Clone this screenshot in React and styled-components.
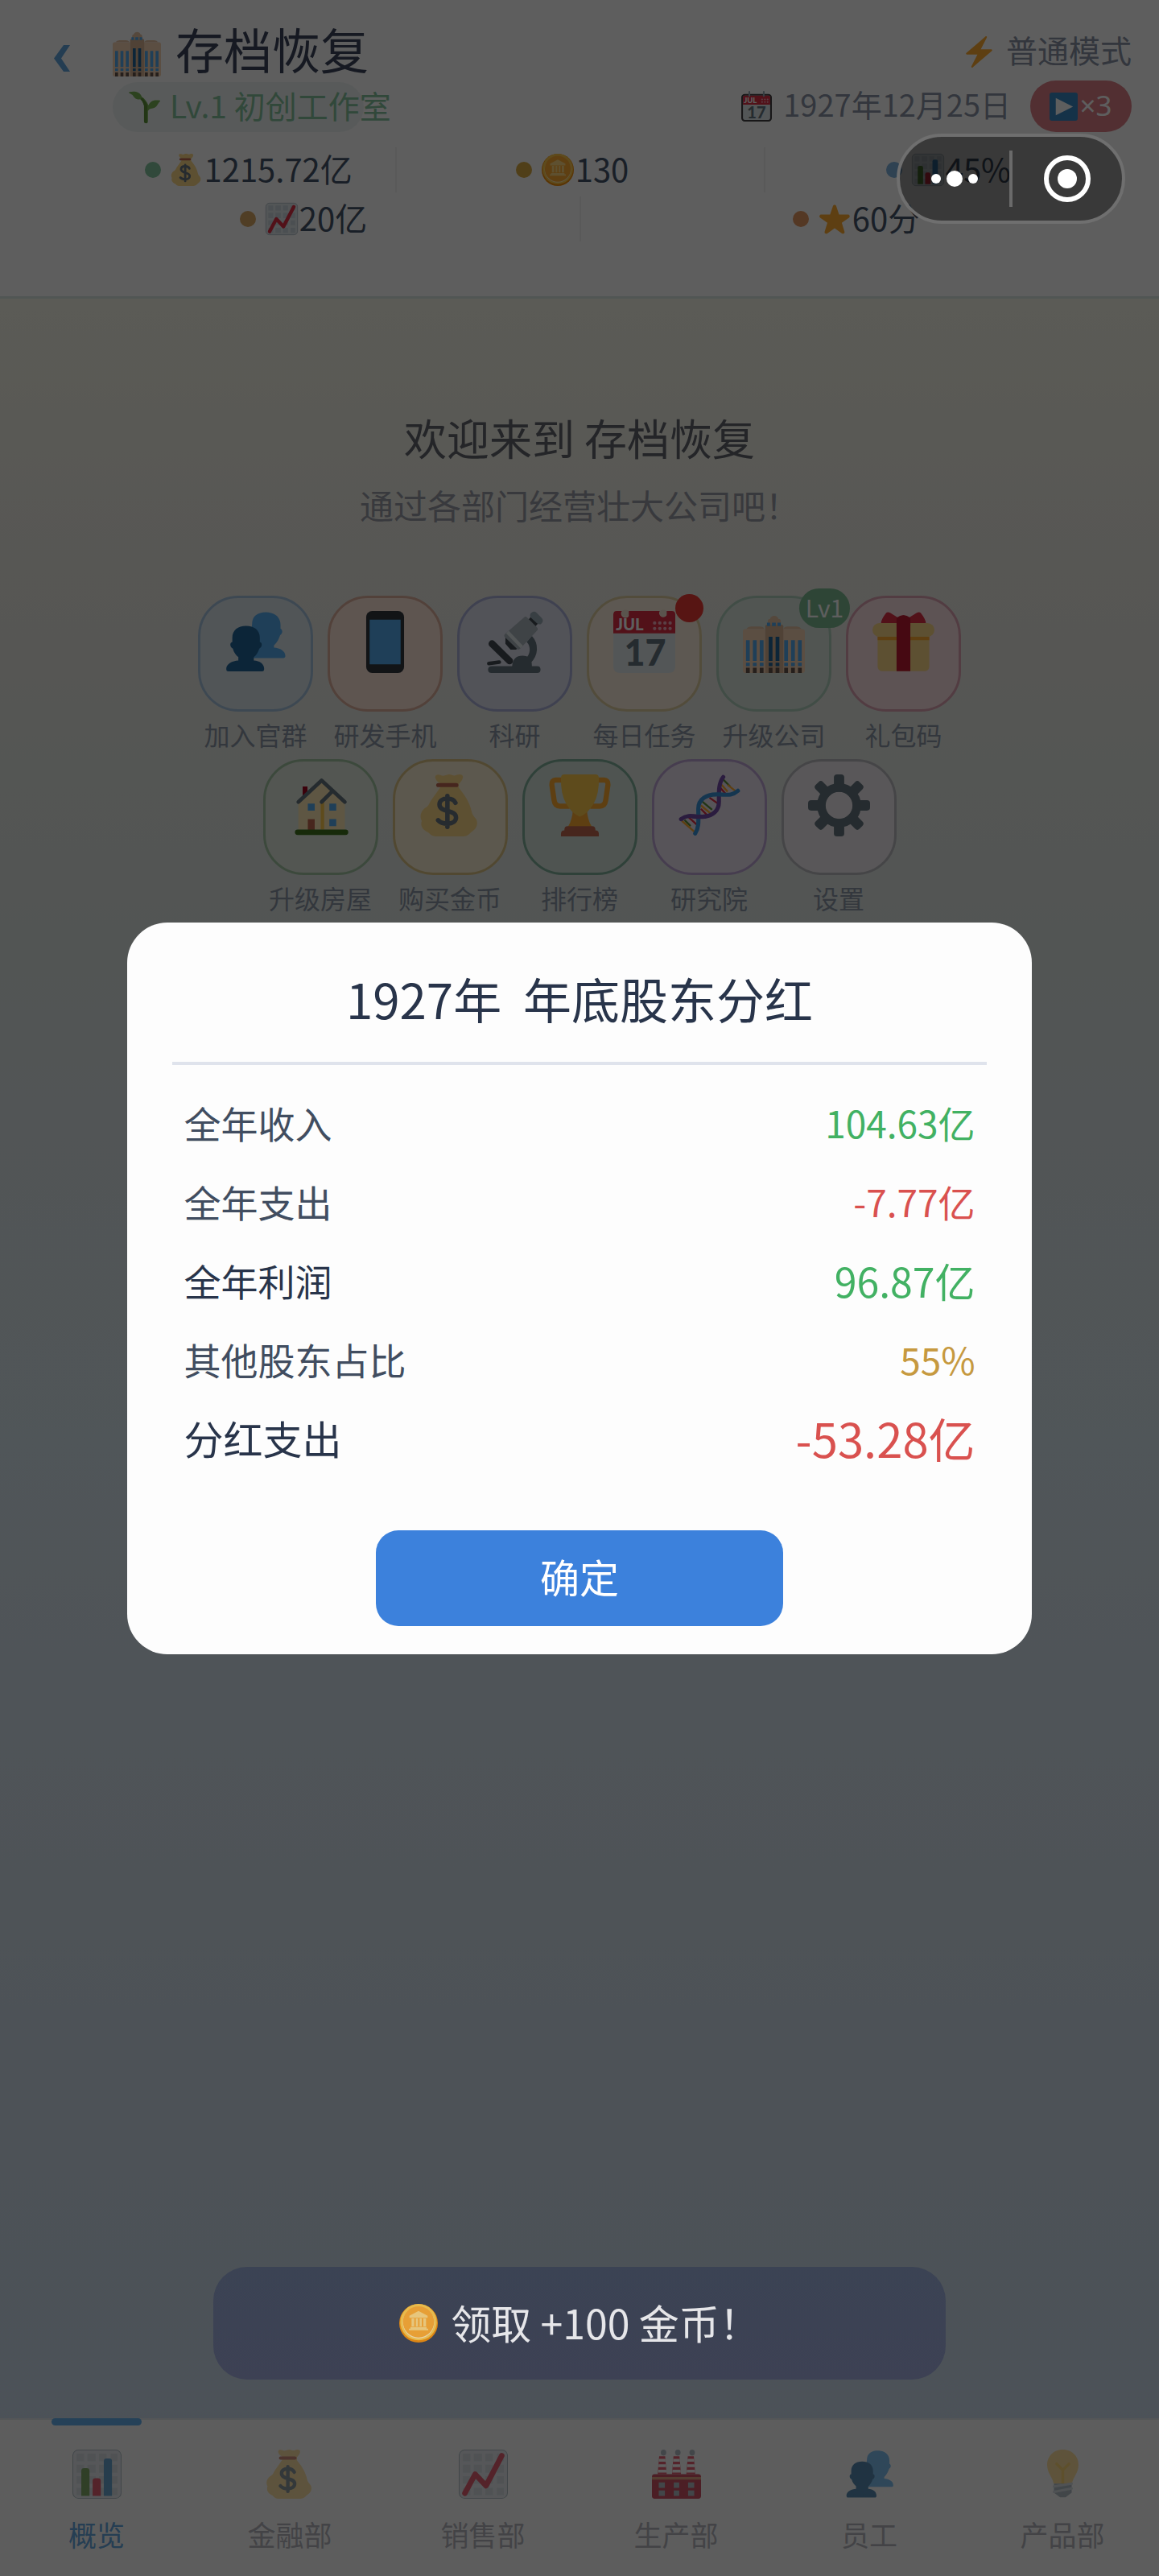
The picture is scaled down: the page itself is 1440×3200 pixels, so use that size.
import React from "react";
import styled, { createGlobalStyle } from "styled-components";

const GlobalStyle = createGlobalStyle`
  *, *::before, *::after { box-sizing: border-box; }
  html, body { margin: 0; padding: 0; }
  body, button {
    font-family: "Noto Sans CJK SC", "Noto Sans", sans-serif;
    font-weight: 400;
  }
  button { border: 0; margin: 0; padding: 0; background: none; color: inherit; cursor: pointer; }
  h1, h2, p, dl, dd, dt { margin: 0; font-weight: 400; }
`;

/* ---------- icons (36-unit grid) ---------- */

const Glyph = styled.svg`
  display: block;
  flex: none;
  width: ${(p) => p.$size}px;
  height: ${(p) => p.$size}px;
  overflow: visible;
`;

const Svg = ({ size, children }) => (
  <Glyph $size={size} viewBox="0 0 36 36" aria-hidden="true">
    {children}
  </Glyph>
);

const Building = ({ size }) => (
  <Svg size={size}>
    <path fill="#E6C3A4" d="M2 10.500q1-1.500 3-1.500h5q2 0 2.500 1.500zM23.500 10.500q.5-1.500 2.500-1.500h5q2 0 3 1.500z" />
    <path fill="#F6D3B4" d="M0 12q0-1.500 1.500-1.500H13V36H1.500Q0 36 0 34.500zM23 10.500h11.500q1.500 0 1.500 1.500v22.500q0 1.500-1.500 1.500H23z" />
    <path fill="#D9B494" d="M13 9q0-1 1-1h8.500q1 0 1 1v27H13z" />
    <path fill="#E6C3A4" d="M14.500 8V6q0-1.500 1.300-1.500.5-1.700 2.400-1.700t2.400 1.700Q22 4.500 22 6v2z" />
    <path fill="#55ACEE" d="M14 6.800h1.800v2H14zm2.900 0h2.200v2h-2.200zm3.200 0H22v2h-1.900z" />
    <path fill="#55ACEE" d="M1.800 17H4v12H1.800zm4 0H8v12H5.800zm4 0H12v12H9.800zM24 17h2.200v12H24zm4 0h2.200v12H28zm4 0h2.200v12H32zM1.800 30H4v2H1.800zm4 0H8v2H5.800zm4 0H12v2H9.800zM24 30h2.200v2H24zm4 0h2.200v2H28zm4 0h2.200v2H32z" />
    <path fill="#226699" d="M15 15h2.200v14H15zm4 0h2.200v14H19zM15 30h2.200v2H15zm4 0h2.200v2H19z" />
    <path fill="#66564E" d="M1.800 33H4v3H1.800zm4 0H8v3H5.800zm4 0H12v3H9.800zM15 33h2.200v3H15zm4 0h2.200v3H19zm5 0h2.200v3H24zm4 0h2.200v3H28zm4 0h2.200v3H32z" />
  </Svg>
);

const Sprout = ({ size }) => (
  <Svg size={size}>
    <path fill="#77B255" d="M22.500 15.500c3-6 7.500-6.500 13-5.500.8.200.6 1 0 1.400-2.500 2-3 7.600-9 7.800-2 .1-3.500 1-4.500 3v12q0 2-2.200 2T17.500 34V16C16.500 12 15 9.500 13 8.500 7.500 10 6 5.500 4 3.500 3 2.500 1 2 .4 1.300 0 .7.500.2 1 .2 6-.8 13-.5 15 6c3 1.500 5.500 5 7.500 9.500z" />
    <path fill="#5C913B" d="M18 10c2 2 3 4 3.300 7l-.3 19q-3.500.5-3.500-2V16c-1-3-2-5.500-4-7.200l1.500-2.300q2 1.500 3 3.500z" />
  </Svg>
);

const MoneyBag = ({ size }) => (
  <Svg size={size}>
    <path fill="#FDD888" d="M12 5C9.500 4 8 .5 10.500.2c1.500-.2 2.500.8 3.500.6C15.500.5 16.500-.2 18 .1c1.500.3 2 .9 3.500.3 1.500-.7 4-.6 3.800 1.100-.1 1.700-1.300 3-2.300 4v2.300c2.500 3.200 6.200 7.700 7.500 14.200.3 1.400 1.200 2.500 2.200 3.600 1.500 2 1 4.900-.7 6.400-1 .9-1.800 1.400-2.600 2.300C28 35.700 27 36 25.500 36h-16c-2 0-3-1-4.500-2.400-3-1.600-4.600-3.600-3.600-6.600-1.700-3 .1-6.500 2.500-7.800 1.600-.9 2-2.600 3-4.200L12 7.800z" />
    <path fill="#BF6952" d="M11 5h10.500q1.200 0 1.200 1.200t-1.200 1.200H11q-1.200 0-1.200-1.200T11 5z" />
    <path fill="none" stroke="#67757F" strokeWidth="2.600" strokeLinecap="round" d="M16.300 12.500v18M21 16.500c-.7-1.600-2.400-2.500-4.700-2.500-2.800 0-4.600 1.300-4.600 3.400 0 5 9.600 2.700 9.600 7.600 0 2.200-2 3.600-4.800 3.600-2.400 0-4.500-.7-5.600-2" />
  </Svg>
);

const Coin = ({ size }) => (
  <Svg size={size}>
    <circle cx="18" cy="18" r="18" fill="#F4900C" />
    <circle cx="18" cy="17" r="17" fill="#FFCC4D" />
    <circle cx="18" cy="17.500" r="14.700" fill="#FFE8B6" />
    <circle cx="18" cy="16.800" r="14.500" fill="#FFAC33" />
    <path fill="#FFD983" d="M18 6.500l8.500 4.500v2h-17v-2zM11.500 13.500h2.500v7.500h-2.500zm4 0h2v7.500h-2zm3.500 0h2v7.500h-2zm3.500 0H25v7.500h-2.500zM10.500 21.500h15V23H27v1.500H9V23h1.500z" />
  </Svg>
);

const GridCard = () => (
  <>
    <rect x=".3" y=".3" width="35.400" height="35.400" rx="4" fill="#E1E8ED" stroke="#99AAB5" strokeWidth=".6" />
    <path fill="#CCD6DD" d="M3 3h5.500v5.500H3zM11 3h6v5.500h-6zM19.500 3h5.500v5.500h-5.500zM28 3h5v5.500h-5zM3 11h5.500v6H3zM11 11h6v6h-6zM19.500 11h5.500v6h-5.500zM28 11h5v6h-5zM3 19.500h5.500V25H3zM11 19.500h6V25h-6zM19.500 19.500h5.500V25h-5.500zM28 19.500h5V25h-5zM3 28h5.500v5.500H3zM11 28h6v5.500h-6zM19.500 28h5.500v5.500h-5.500zM28 28h5v5.500h-5z" />
  </>
);

const TrendChart = ({ size }) => (
  <Svg size={size}>
    <GridCard />
    <path fill="none" stroke="#DD2E44" strokeWidth="4" strokeLinecap="round" strokeLinejoin="round" d="M4.500 32L12 18l8 8.500L31.500 4.500" />
  </Svg>
);

const BarChart = ({ size }) => (
  <Svg size={size}>
    <GridCard />
    <path fill="#5C913B" d="M6.500 34V15.500q0-2 2-2h2q2 0 2 2V34z" />
    <path fill="#DD2E44" d="M14.800 34V23q0-2 2-2h2q2 0 2 2v11z" />
    <path fill="#3B88C3" d="M23 34V8.500q0-2 2-2h2q2 0 2 2V34z" />
  </Svg>
);

const Star = ({ size }) => (
  <Svg size={size}>
    <path fill="#FFAC33" d="M27.287 34.627c-.404 0-.806-.124-1.152-.371L18 28.422l-8.135 5.834c-.343.247-.744.371-1.147.371-.405 0-.81-.125-1.157-.378-.679-.492-.967-1.365-.713-2.164l3.034-9.792-8.062-5.681c-.685-.488-.977-1.358-.723-2.159.252-.801.993-1.346 1.832-1.352l9.947-.016 3.215-9.548c.268-.793 1.012-1.327 1.848-1.327.838 0 1.581.534 1.850 1.327l3.154 9.548 10.008.016c.84.006 1.581.551 1.833 1.352.253.801-.038 1.671-.722 2.159l-8.063 5.681 3.033 9.792c.254.799-.033 1.672-.713 2.164-.347.253-.752.378-1.157.378z" />
  </Svg>
);

const Bolt = ({ size }) => (
  <Svg size={size}>
    <path fill="#FFAC33" d="M32.938 15.651C32.792 15.260 32.418 15 32 15H19.925L26.890 1.458c.219-.426.106-.947-.271-1.243C26.437.071 26.218 0 26 0c-.233 0-.466.082-.653.243L18 6.588 3.347 19.243c-.316.273-.43.714-.284 1.105S3.582 21 4 21h12.075L9.110 34.542c-.219.426-.106.947.271 1.243.182.144.401.215.619.215.233 0 .466-.082.653-.243L18 29.412l14.653-12.655c.317-.273.43-.714.285-1.106z" />
  </Svg>
);

const CalendarFace = () => (
  <>
    <g fill="#F4ABBA">
      {[24, 27, 30, 33].map((x) => (
        <React.Fragment key={x}>
          <circle cx={x} cy="7" r="1" />
          <circle cx={x} cy="10.200" r="1" />
        </React.Fragment>
      ))}
    </g>
    <text x="1.500" y="11.300" fill="#fff" fontFamily="Lato, sans-serif" fontWeight="900" fontSize="9.500">JUL</text>
    <text x="18.500" y="32" fill="#66757F" textAnchor="middle" fontFamily="Lato, sans-serif" fontWeight="900" fontSize="21">17</text>
  </>
);

const Calendar = ({ size }) => (
  <Svg size={size}>
    <path fill="#E1E8ED" d="M0 12h36v20q0 4-4 4H4q-4 0-4-4z" />
    <path fill="#DD2E44" d="M0 13V2q0-2 2-2h3a2 2 0 0 0 4 3V0h18a2 2 0 0 0 4 2.500V0h3q2 0 2 2v11z" />
    <circle cx="7" cy="1.200" r="1.900" fill="#F3E3D0" />
    <circle cx="29" cy="1.200" r="1.900" fill="#F3E3D0" />
    <CalendarFace />
  </Svg>
);

const DeskCalendar = ({ size }) => (
  <Svg size={size}>
    <rect x="1" y="4.500" width="34" height="30.500" rx="3" fill="#E1E8ED" stroke="#414042" strokeWidth="2" />
    <path fill="#DD2E44" d="M2 7q0-1.500 1.500-1.500h29Q34 5.500 34 7v9H2z" />
    <path stroke="#99AAB5" strokeWidth="2" strokeLinecap="round" d="M9.500 1v5M26.500 1v5" />
    <g fill="#F4ABBA">
      {[24.5, 27.8, 31].map((x) => (
        <React.Fragment key={x}>
          <circle cx={x} cy="10" r="1" />
          <circle cx={x} cy="13" r="1" />
        </React.Fragment>
      ))}
    </g>
    <text x="3" y="14.500" fill="#fff" fontFamily="Lato, sans-serif" fontWeight="900" fontSize="9">JUL</text>
    <text x="18" y="32.500" fill="#66757F" textAnchor="middle" fontFamily="Lato, sans-serif" fontWeight="900" fontSize="19">17</text>
  </Svg>
);

const Play = ({ size }) => (
  <Svg size={size}>
    <rect width="36" height="36" rx="3" fill="#3B88C3" />
    <path fill="#fff" d="M8 7l22 11L8 29z" />
  </Svg>
);

const People = ({ size }) => (
  <Svg size={size}>
    <path fill="#55ACEE" d="M16 7.500C16 3 19.300.7 24 .7S32.500 3.300 32.500 8v2.300c1.400.6 1.300 2.900-.2 3.700-.7 2.300-1.900 4.300-3.600 6v1.300c3.500.2 6.600 2 6.600 4.700 0 .9-.2 1.300-1 1.300H14z" />
    <path fill="#226699" d="M4.500 15.500c0-4.300 3.200-6.800 8-6.800s8 2.500 8 6.800V18c1.600.2 1.500 3-.3 3.800-.8 2.500-1.900 3.800-3.200 5v2c3.500.2 6 2 6 4.800 0 1-.3 1.500-1.200 1.500H2.200C1.300 35.100 1 34.600 1 33.600c0-2.800 3.500-4.600 7-4.800v-2c-1.300-1.200-2.600-2.700-3.200-5-1.800-.8-1.900-3.600-.3-3.800z" />
  </Svg>
);

const Phone = ({ size }) => (
  <Svg size={size}>
    <rect x="7" width="22" height="36" rx="3.500" fill="#31373D" />
    <path fill="#55ACEE" d="M9 5h18v26H9z" />
  </Svg>
);

const Microscope = ({ size }) => (
  <Svg size={size}>
    <path fill="#66757F" d="M28 14.500q3.200 3.500 2.900 8T27 30.500l-3.500-2q3-2.500 3.200-5.500T25 18z" />
    <path fill="#66757F" d="M5 32h11.500q.5-6 6-6t5.500 6h3q2 0 2 2t-2 2H4.500q-2 0-2-2t2.500-2z" />
    <path stroke="#414B52" strokeWidth="4" strokeLinecap="round" d="M4.800 19l10.200 10" />
    <path stroke="#414B52" strokeWidth="2.200" strokeLinecap="round" d="M3 30.500l6-.8" />
    <path fill="#414B52" d="M12.600 15l7 7-1 .4h-3L12.600 19z" />
    <path fill="#414B52" d="M25.500 5.500l2.500-2.700 4 4L29.500 9.500z" />
    <path fill="#AAB5BD" d="M23.300 3.800q1-1 2 0l5.600 5.700q1 1 0 2L21.200 21.900q-1 1-2 0l-6.800-6.600q-1-1 0-2z" />
    <path fill="#E1E8ED" d="M14.500 11.500l8.300 8.700-1.400 1.400-8.400-8.600z" />
    <path fill="#99AAB5" d="M27.500 1.200q1.500-1.500 3-.4l3.300 3.400q1.200 1.500-.2 3-1.400 1.200-2.800-.2L27.500 4q-1.200-1.400 0-2.800z" />
  </Svg>
);

const Gift = ({ size }) => (
  <Svg size={size}>
    <path fill="#FDD888" d="M3 13h30v19q0 3-3 3H6q-3 0-3-3z" />
    <rect y="7" width="36" height="8" rx="4" fill="#FDD888" />
    <path fill="#FFAC33" d="M3 15h30v2H3z" />
    <path fill="#DD2E44" d="M5 7q0-2 3-6 1-.8 2.500.2L15 4q1.500-1.500 3-1.500T21 4l4.500-2.800q1.500-1 2.500-.2 3 4 3 6H22v2h-8V7z" />
    <path fill="#BE1931" d="M14 4q4-3 8 0v31h-8z" />
  </Svg>
);

const House = ({ size }) => (
  <Svg size={size}>
    <path fill="#A0041E" d="M7.500 7h2.800v7H7.500z" />
    <path fill="#FFE8B6" d="M5 15L18.500 3.500 32 15v17H5z" />
    <path fill="#FFCC4D" d="M18 16l2-1v17h-2z" />
    <path fill="none" stroke="#66757F" strokeWidth="2.200" strokeLinecap="round" strokeLinejoin="round" d="M5 16L18.500 3.500 32 16M25 9.500L18.500 16" />
    <path fill="#55ACEE" d="M10.500 17h4v4h-4zM23 17h4v4h-4zM23 26h4v4h-4z" />
    <path fill="#C1694F" d="M10.500 26h4v6.500h-4z" />
    <rect x="3" y="32" width="31" height="3.200" rx="1.600" fill="#3E721D" />
  </Svg>
);

const Trophy = ({ size }) => (
  <Svg size={size}>
    <path fill="none" stroke="#FFAC33" strokeWidth="3" strokeLinejoin="round" d="M9 3.300H4Q1.500 3.300 1.700 6l1.300 9q.5 3.500 3.500 3.500H12M27 3.300h5q2.500 0 2.300 2.700L33 15q-.5 3.500-3.500 3.500H24" />
    <path fill="#FFAC33" d="M14 20h8q.5 7 3 10.500H11Q13.500 27 14 20z" />
    <path fill="#FFCC4D" d="M7 2q0-2 2-2h18q2 0 2 2 .3 9-3 15-3.500 6-8 7.500Q13.500 23 10 17 6.700 11 7 2z" />
    <path fill="#C1694F" d="M9 32q0-2 2-2h14q2 0 2 2v.5q2 0 2 2V36H7v-1.500q0-2 2-2z" />
  </Svg>
);

const Dna = ({ size }) => (
  <Svg size={size}>
    <g strokeWidth="1.100">
      <path stroke="#5C913B" d="M26 3l4 4M3.500 26.500L7 30M13.500 15.500l6 5" />
      <path stroke="#FFAC33" d="M25 6l3.500 4M2 27l8 7M13 18l6 5M28.500 6l5 4" />
      <path stroke="#DD2E44" d="M24.500 8l3 3.500M6 25l5 4.500M18 13.500l5 3.500M13 20l4 4" />
    </g>
    <path fill="none" stroke="#744EAA" strokeWidth="2.400" strokeLinecap="round" d="M1.500 26C6 22.500 10 25 15 24.500s8.500-3.500 8.500-8.500S23 5.500 26 1.500" />
    <path fill="none" stroke="#3B94D9" strokeWidth="2.400" strokeLinecap="round" d="M34.500 9.500c-4 3.500-7 2-12.500 2.100S11.500 14 11.500 20s.7 10.500-1.800 14.300" />
    <path fill="none" stroke="#744EAA" strokeWidth="2.400" d="M8 24.400c3 .3 5 .4 8 0" />
  </Svg>
);

const Gear = ({ size }) => (
  <Svg size={size}>
    <g fill="#66757F">
      {[0, 45, 90, 135, 180, 225, 270, 315].map((a) => (
        <rect key={a} x="15" y="0" width="6" height="10" rx="1.800" transform={`rotate(${a} 18 18)`} />
      ))}
    </g>
    <circle cx="18" cy="18" r="10.300" fill="none" stroke="#66757F" strokeWidth="5" />
  </Svg>
);

const Factory = ({ size }) => (
  <Svg size={size}>
    {[4, 14.5, 25].map((x) => (
      <g key={x} transform={`translate(${x} 0)`}>
        <ellipse cx="4.500" cy="2.200" rx="2" ry="2.200" fill="#99AAB5" />
        <path fill="#DD2E44" d="M1.300 4.800h4.400L6.800 18H.2z" />
        <path fill="#fff" d="M1.100 6.800h4.800l.1 2H1zM.9 10.800h5.300l.1 2H.7zM.6 14.800h5.900l.2 2H.4z" />
      </g>
    ))}
    <rect y="18" width="36" height="18" rx="2" fill="#BE1931" />
    <path fill="#DA8A5E" d="M0 20h36v2H0z" />
    <path fill="#99AAB5" d="M5 24h4.500v4H5zM16 24h4v4h-4zM26.500 24H31v4h-4.500zM5 30h4.500v4H5zM16 30h4v4h-4zM26.500 30H31v4h-4.500z" />
  </Svg>
);

const Bulb = ({ size }) => (
  <Svg size={size}>
    <path fill="#FFD983" d="M18 0c6.500 0 11.500 4.700 11.500 11.200 0 6-4 8.800-4.800 13.800H11.300c-.8-5-4.800-7.800-4.800-13.800C6.500 4.700 11.500 0 18 0z" />
    <path fill="none" stroke="#FFCC4D" strokeWidth="2" strokeLinecap="round" d="M13.500 10.500L18 15l4.500-4.500M18 15v10" />
    <path fill="#99AAB5" d="M11.500 25h13v6.500L20 35h-4l-4.500-3.500z" />
    <path stroke="#CCD6DD" strokeWidth="1.800" strokeLinecap="round" d="M11.500 27l13-2M11.500 31l13-2.500" />
  </Svg>
);

/* ---------- page ---------- */

const Page = styled.div`
  position: relative;
  display: flex;
  flex-direction: column;
  min-height: 100vh;
  background: linear-gradient(180deg, #fbfae9 0%, #f6f6e8 12%, #ecebe5 22%, #dfe6e4 36%, #dae8f0 56%, #d2dfec 78%, #cbdcef 100%);
`;

const Header = styled.header`
  padding: 28px 34px 68px;
  background: #ffffff;
  border-bottom: 3px solid #dbe8e4;
`;

const TopRow = styled.div`
  display: flex;
  align-items: flex-start;
`;

const BackButton = styled.button`
  flex: none;
  display: flex;
  align-items: center;
  width: 106px;
  height: 88px;
  padding-left: 33px;
`;

const Brand = styled.div`
  flex: 1;
  min-width: 0;
`;

const BrandTitle = styled.div`
  display: flex;
  align-items: center;
  gap: 18px;
  height: 74px;
  h1 {
    color: #3c465c;
    font-size: 60px;
    line-height: 68px;
    padding-bottom: 10px;
  }
`;

const LevelPill = styled.div`
  display: flex;
  align-items: center;
  gap: 12px;
  width: 312px;
  height: 62px;
  padding: 0 20px;
  border-radius: 31px;
  background: #eff5f4;
  color: #86c49e;
  font-size: 39px;
  line-height: 52px;
  white-space: nowrap;
  span { padding-bottom: 6px; }
`;

const Meta = styled.div`
  flex: none;
  color: #8a94a6;
  font-size: 39px;
  line-height: 52px;
`;

const MetaRow = styled.div`
  display: flex;
  align-items: center;
  justify-content: flex-end;
  gap: 14px;
  height: ${(p) => p.$height}px;
  span { padding-bottom: 6px; }
`;

const DateText = styled.span`
  font-size: 38px;
`;

const SpeedButton = styled.button`
  display: flex;
  align-items: center;
  justify-content: center;
  gap: 2px;
  width: 126px;
  height: 64px;
  margin-left: 10px;
  border-radius: 32px;
  background: #dd8088;
  color: #ffffff;
  font-family: "Noto Sans", sans-serif;
  font-size: 35px;
  line-height: 52px;
  span { padding-bottom: 2px; }
`;

const Stats = styled.div`
  display: flex;
  flex-direction: column;
  gap: 5px;
  margin-top: 19px;
`;

const StatRow = styled.div`
  display: grid;
  grid-auto-flow: column;
  grid-auto-columns: minmax(0, 1fr);
`;

const Stat = styled.div`
  display: flex;
  align-items: center;
  justify-content: center;
  height: 56px;
  padding-left: ${(p) => (p.$lead ? 92 : 0)}px;
  padding-right: ${(p) => (p.$trail ? 20 : 0)}px;
  color: #46546a;
  font-size: 40px;
  line-height: 52px;
  white-space: nowrap;
  & + & { border-left: 2px solid #f2f2f2; }
`;

const StatDot = styled.span`
  flex: none;
  width: 20px;
  height: 20px;
  margin-right: 12px;
  border-radius: 50%;
  background: ${(p) => p.$color};
`;

const StatValue = styled.span`
  margin-left: 2px;
  padding-bottom: 4px;
`;

const Main = styled.main`
  flex: 1;
  padding: 138px 40px 0;
  text-align: center;
`;

const Welcome = styled.h2`
  color: #62656e;
  font-size: 53px;
  line-height: 68px;
`;

const Subtitle = styled.p`
  margin-top: 20px;
  color: #989ba6;
  font-size: 42px;
  line-height: 60px;
`;

const Shortcuts = styled.div`
  display: flex;
  flex-wrap: wrap;
  justify-content: center;
  gap: 11px 18px;
  max-width: 1000px;
  margin: 83px auto 0;
`;

const Shortcut = styled.button`
  width: 143px;
  color: #8c96a6;
  font-size: 32px;
  line-height: 40px;
  white-space: nowrap;
`;

const Tile = styled.span`
  position: relative;
  display: flex;
  justify-content: center;
  height: 144px;
  margin-bottom: 8px;
  padding-top: 16px;
  border: 3px solid ${(p) => p.$line};
  border-radius: 50px;
  background: ${(p) => p.$fill};
`;

const RedDot = styled.span`
  position: absolute;
  top: -5px;
  right: -5px;
  width: 35px;
  height: 35px;
  border-radius: 50%;
  background: #ed3a35;
`;

const LevelBadge = styled.span`
  position: absolute;
  top: -12px;
  right: -26px;
  width: 63px;
  height: 49px;
  border-radius: 25px;
  background: #7dbb92;
  color: #ffffff;
  font-size: 30px;
  line-height: 47px;
  text-align: center;
`;

const Nav = styled.nav`
  display: flex;
  height: 196px;
  background: #fdfdfd;
  border-top: 2px solid #e4e8ee;
`;

const NavItem = styled.button`
  position: relative;
  flex: 1;
  display: flex;
  flex-direction: column;
  align-items: center;
  padding-top: 37px;
  color: ${(p) => (p.$active ? "#66a8e0" : "#b5b6bf")};
  font-size: 35px;
  line-height: 44px;
  svg { opacity: 0.75; margin-bottom: 22px; }
  &::before {
    content: "";
    display: ${(p) => (p.$active ? "block" : "none")};
    position: absolute;
    top: -2px;
    left: calc(50% - 56px);
    width: 112px;
    height: 9px;
    border-radius: 5px;
    background: #66b0ee;
  }
`;

/* ---------- layers above the page ---------- */

const Shade = styled.div`
  position: fixed;
  inset: 0;
  display: flex;
  align-items: center;
  justify-content: center;
  background: rgba(0, 0, 0, 0.63);
`;

const Dialog = styled.section`
  width: 78%;
  padding: 54px 56px 35px;
  border-radius: 50px;
  background: #fdfdfd;
  text-align: center;
`;

const DialogTitle = styled.h2`
  padding-bottom: 40px;
  border-bottom: 4px solid #dfe3ec;
  color: #28344a;
  font-size: 60px;
  line-height: 79px;
  white-space: pre;
`;

const Ledger = styled.dl`
  margin: 24px 0 64px;
  padding: 0 14px;
`;

const LedgerRow = styled.div`
  display: flex;
  align-items: center;
  justify-content: space-between;
  height: 98px;
  padding-bottom: 4px;
`;

const LedgerLabel = styled.dt`
  color: ${(p) => (p.$strong ? "#28344a" : "#414d60")};
  font-size: ${(p) => p.$size}px;
  line-height: 80px;
`;

const LedgerValue = styled.dd`
  color: ${(p) => p.$color};
  font-size: ${(p) => p.$size}px;
  line-height: 80px;
`;

const ConfirmButton = styled.button`
  width: 50%;
  height: 119px;
  padding-bottom: 4px;
  border-radius: 28px;
  background: #3c81dc;
  color: #ffffff;
  font-size: 49px;
  line-height: 72px;
`;

const ClaimButton = styled.button`
  position: fixed;
  bottom: 244px;
  left: 50%;
  display: flex;
  align-items: center;
  justify-content: center;
  gap: 16px;
  width: 910px;
  height: 140px;
  margin-left: -455px;
  border-radius: 42px;
  background: linear-gradient(180deg, #3b4354, #3d4154);
  color: #e6e6e9;
  font-size: 50px;
  line-height: 68px;
  svg { opacity: 0.88; }
  span { padding-bottom: 4px; }
`;

const Capsule = styled.div`
  position: fixed;
  top: 166px;
  right: 42px;
  display: flex;
  align-items: center;
  width: 284px;
  height: 112px;
  border: 4px solid #6f6f6f;
  border-radius: 56px;
  background: rgba(0, 0, 0, 0.4);
`;

const CapsuleButton = styled.button`
  flex: 1;
  height: 100%;
  display: flex;
  align-items: center;
  justify-content: center;
`;

const CapsuleLine = styled.span`
  width: 4px;
  height: 70px;
  background: #6a6a6a;
`;

const StatItem = ({ dot, icon: Icon, lead, trail, children }) => (
  <Stat $lead={lead} $trail={trail}>
    <StatDot $color={dot} />
    <Icon size={40} />
    <StatValue>{children}</StatValue>
  </Stat>
);

const shortcuts = [
  { label: "加入官群", icon: People, fill: "#dce6ec", line: "#a5c3df" },
  { label: "研发手机", icon: Phone, fill: "#ffe6da", line: "#deb09d" },
  { label: "科研", icon: Microscope, fill: "#dee0ee", line: "#aab0da" },
  { label: "每日任务", icon: Calendar, fill: "#fdeedd", line: "#dfcd9f" },
  { label: "升级公司", icon: Building, fill: "#dbe6df", line: "#b0d0be", badge: "Lv1" },
  { label: "礼包码", icon: Gift, fill: "#fde2e4", line: "#dda2b2" },
  { label: "升级房屋", icon: House, fill: "#e0e8dd", line: "#a2c6a4" },
  { label: "购买金币", icon: MoneyBag, fill: "#f9efd4", line: "#dcc486" },
  { label: "排行榜", icon: Trophy, fill: "#d6e4dc", line: "#80b09b" },
  { label: "研究院", icon: Dna, fill: "#ece4f2", line: "#bfa6d6" },
  { label: "设置", icon: Gear, fill: "#f0ecf0", line: "#bcbcc0" },
].map((item) => ({ ...item, dot: item.label === "每日任务" }));

const ledger = [
  { label: "全年收入", value: "104.63亿", color: "#42b163" },
  { label: "全年支出", value: "-7.77亿", color: "#d9514f" },
  { label: "全年利润", value: "96.87亿", color: "#42b163", strong: true, valueSize: 50 },
  { label: "其他股东占比", value: "55%", color: "#c6993f" },
  { label: "分红支出", value: "-53.28亿", color: "#d9514f", strong: true, labelSize: 49, valueSize: 58 },
];

const tabs = [
  { label: "概览", icon: BarChart, active: true },
  { label: "金融部", icon: MoneyBag },
  { label: "销售部", icon: TrendChart },
  { label: "生产部", icon: Factory },
  { label: "员工", icon: People },
  { label: "产品部", icon: Bulb },
];

export default function App() {
  return (
    <>
      <GlobalStyle />
      <Page>
        <Header>
          <TopRow>
            <BackButton aria-label="返回">
              <svg width="20" height="33" viewBox="0 0 20 33" aria-hidden="true">
                <path fill="#62a6df" d="M12 0h8L9 16.500 20 33h-8L0 16.500z" />
              </svg>
            </BackButton>
            <Brand>
              <BrandTitle>
                <Building size={60} />
                <h1>存档恢复</h1>
              </BrandTitle>
              <LevelPill>
                <Sprout size={39} />
                <span>Lv.1 初创工作室</span>
              </LevelPill>
            </Brand>
            <Meta>
              <MetaRow $height={72}>
                <Bolt size={39} />
                <span>普通模式</span>
              </MetaRow>
              <MetaRow $height={64}>
                <DeskCalendar size={38} />
                <DateText>1927年12月25日</DateText>
                <SpeedButton>
                  <Play size={35} />
                  <span>×3</span>
                </SpeedButton>
              </MetaRow>
            </Meta>
          </TopRow>
          <Stats>
            <StatRow>
              <StatItem dot="#86c7a0" icon={MoneyBag} lead>1215.72亿</StatItem>
              <StatItem dot="#d9ab45" icon={Coin} trail>130</StatItem>
              <StatItem dot="#7fb2dd" icon={BarChart}>45%</StatItem>
            </StatRow>
            <StatRow>
              <StatItem dot="#d9a866" icon={TrendChart}>20亿</StatItem>
              <StatItem dot="#e59862" icon={Star}>60分</StatItem>
            </StatRow>
          </Stats>
        </Header>

        <Main>
          <Welcome>欢迎来到 存档恢复</Welcome>
          <Subtitle>通过各部门经营壮大公司吧！</Subtitle>
          <Shortcuts>
            {shortcuts.map(({ label, icon: Icon, fill, line, dot, badge }) => (
              <Shortcut key={label}>
                <Tile $fill={fill} $line={line}>
                  <Icon size={77} />
                  {dot && <RedDot />}
                  {badge && <LevelBadge>{badge}</LevelBadge>}
                </Tile>
                {label}
              </Shortcut>
            ))}
          </Shortcuts>
        </Main>

        <Nav>
          {tabs.map(({ label, icon: Icon, active }) => (
            <NavItem key={label} $active={active}>
              <Icon size={61} />
              {label}
            </NavItem>
          ))}
        </Nav>
      </Page>

      <Shade>
        <Dialog role="dialog" aria-labelledby="dividend-title">
          <DialogTitle id="dividend-title">{"1927年  年底股东分红"}</DialogTitle>
          <Ledger>
            {ledger.map((r) => (
              <LedgerRow key={r.label}>
                <LedgerLabel $strong={r.strong} $size={r.labelSize || 46}>{r.label}</LedgerLabel>
                <LedgerValue $color={r.color} $size={r.valueSize || 46}>{r.value}</LedgerValue>
              </LedgerRow>
            ))}
          </Ledger>
          <ConfirmButton>确定</ConfirmButton>
        </Dialog>
      </Shade>

      <ClaimButton>
        <Coin size={48} />
        <span>领取 +100 金币！</span>
      </ClaimButton>

      <Capsule>
        <CapsuleButton aria-label="更多">
          <svg width="60" height="20" viewBox="0 0 60 20" fill="#fff" aria-hidden="true">
            <circle cx="7" cy="10" r="6" />
            <circle cx="30" cy="10" r="10" />
            <circle cx="53" cy="10" r="6" />
          </svg>
        </CapsuleButton>
        <CapsuleLine />
        <CapsuleButton aria-label="关闭">
          <svg width="58" height="58" viewBox="0 0 58 58" aria-hidden="true">
            <circle cx="29" cy="29" r="26" fill="none" stroke="#fff" strokeWidth="6" />
            <circle cx="29" cy="29" r="12" fill="#fff" />
          </svg>
        </CapsuleButton>
      </Capsule>
    </>
  );
}
